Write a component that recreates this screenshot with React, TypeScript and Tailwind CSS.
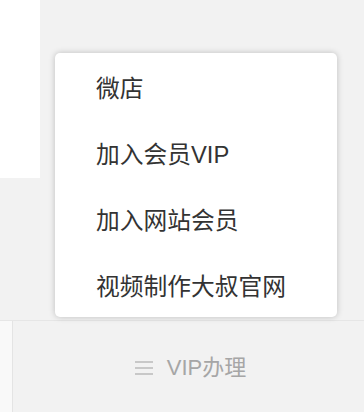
const items = ["微店", "加入会员VIP", "加入网站会员", "视频制作大叔官网"];

const MenuIcon = () => (
  <svg width="18" height="14" viewBox="0 0 18 14" className="text-[#c8c8c8]">
    <rect x="0" y="0" width="18" height="2" fill="currentColor" />
    <rect x="0" y="6" width="18" height="2" fill="currentColor" />
    <rect x="0" y="12" width="18" height="2" fill="currentColor" />
  </svg>
);

const App = () => {
  return (
    <div
      className="relative flex h-[412px] w-[364px] flex-col overflow-hidden bg-[#f2f2f2]"
      style={{ fontFamily: '"Liberation Sans", "Noto Sans CJK SC", sans-serif' }}
    >
      {/* page area */}
      <div className="h-[320px]">
        <div className="h-[178px] w-[40px] bg-white" />
      </div>

      {/* bottom bar */}
      <div className="flex h-[92px] border-t border-[#e6e6e6]">
        <div className="w-[13px] border-r border-[#e4e4e4] bg-[#f9f9f9]" />
        <div className="flex flex-1 items-center justify-center gap-[14px] pl-[4px] pt-[2px] text-[22px] text-[#a6a6a6]">
          <MenuIcon />
          <span className="leading-none">VIP办理</span>
        </div>
      </div>

      {/* dropdown */}
      <div className="absolute left-[55px] top-[53px] flex w-[282px] flex-col rounded-[5px] bg-white shadow-[0_0_6px_rgba(0,0,0,0.22)]">
        {items.map((item) => (
          <div
            key={item}
            className="flex h-[66px] items-center pl-[41px] pt-[5px] text-[23.75px] leading-none text-[#333]"
          >
            {item}
          </div>
        ))}
      </div>
    </div>
  );
};

export default App;
